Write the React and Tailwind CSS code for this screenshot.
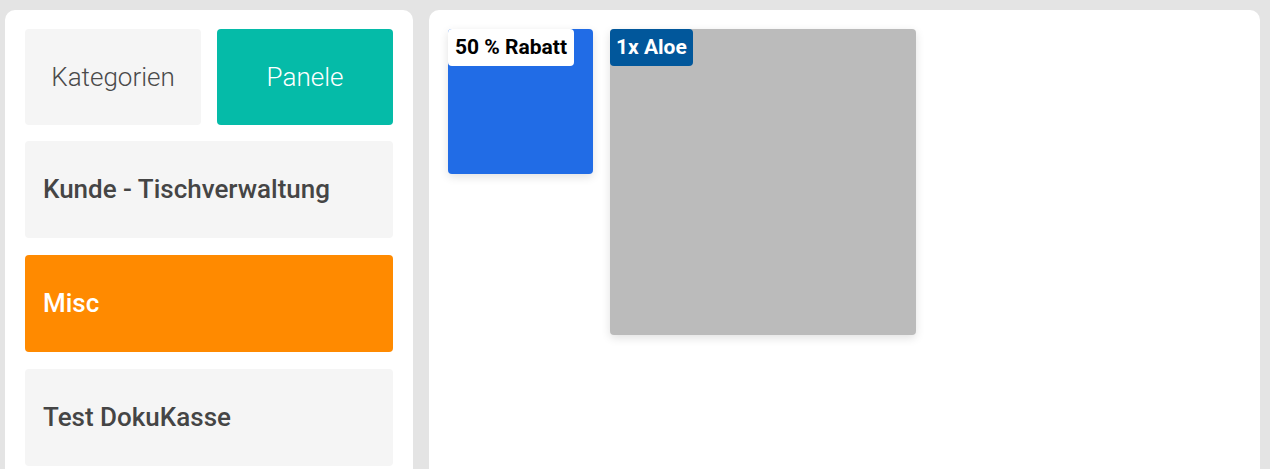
const categories = [
    { name: "Kunde - Tischverwaltung", active: false },
    { name: "Misc", active: true },
    { name: "Test DokuKasse", active: false },
];

const App = () => {
    return (
        <div className="h-[469px] overflow-hidden bg-[#e4e4e4] pt-[10px] pl-[5px] pr-[10px] flex gap-4 font-['Roboto',sans-serif]">
            {/* linke Spalte */}
            <div className="w-[408px] shrink-0 h-[480px] bg-white rounded-[10px] px-5 pt-[19px] flex flex-col">
                <div className="flex gap-4">
                    <button className="flex-1 h-[96px] rounded bg-[#f5f5f5] text-[26px] font-light text-[#4a4a4a]">
                        Kategorien
                    </button>
                    <button className="flex-1 h-[96px] rounded bg-[#05bba8] text-[26px] font-light text-white">
                        Panele
                    </button>
                </div>
                <div className="flex flex-col gap-[17px] mt-4">
                    {categories.map((cat, index) => (
                        <div
                            key={index}
                            className={
                                cat.active
                                    ? "h-[97px] rounded bg-[#ff8a00] text-white flex items-center pl-[18px] text-[26px] font-medium"
                                    : "h-[97px] rounded bg-[#f5f5f5] text-[#454545] flex items-center pl-[18px] text-[26px] font-medium"
                            }
                        >
                            {cat.name}
                        </div>
                    ))}
                </div>
            </div>

            {/* Panele */}
            <div className="flex-1 h-[480px] bg-white rounded-[10px] pt-[19px] pl-[19px] flex items-start gap-[17px]">
                <div className="relative w-[145px] h-[145px] rounded bg-[#216ce6] shadow-[0_3px_10px_rgba(0,0,0,0.12)]">
                    <span className="absolute top-0 left-0 h-[37px] px-[7px] flex items-center bg-white rounded text-black text-[21px] font-bold">
                        50 % Rabatt
                    </span>
                </div>
                <div className="relative w-[306px] h-[306px] rounded bg-[#bbbbbb] shadow-[0_3px_10px_rgba(0,0,0,0.12)]">
                    <span className="absolute top-0 left-0 h-[37px] px-[6px] flex items-center bg-[#01579b] rounded text-white text-[21px] font-bold">
                        1x Aloe
                    </span>
                </div>
            </div>
        </div>
    );
};

export default App;
